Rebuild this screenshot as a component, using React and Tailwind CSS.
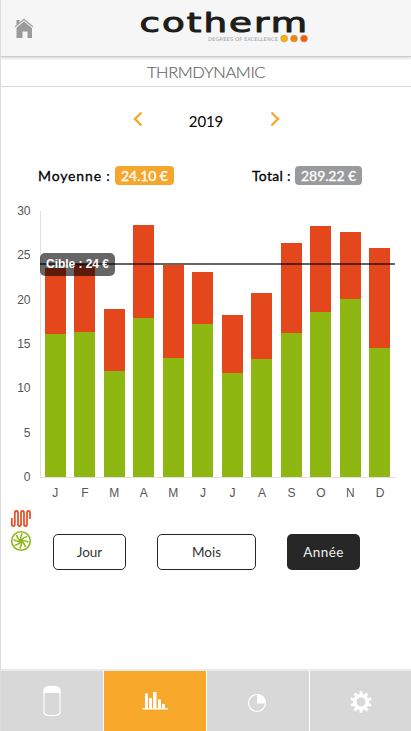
import React from 'react';

const PLOT_HEIGHT = 266;

// Pixel heights above the baseline: whole stack and its green part.
const MONTHS = [
  { label: 'J', total: 209.3, green: 143 },
  { label: 'F', total: 213, green: 145.4 },
  { label: 'M', total: 168, green: 106.5 },
  { label: 'A', total: 252, green: 159.3 },
  { label: 'M', total: 212.5, green: 119 },
  { label: 'J', total: 204.8, green: 153 },
  { label: 'J', total: 162, green: 104 },
  { label: 'A', total: 184, green: 118 },
  { label: 'S', total: 233.6, green: 143.8 },
  { label: 'O', total: 251.4, green: 164.7 },
  { label: 'N', total: 245, green: 178 },
  { label: 'D', total: 229, green: 129 },
];

const TICKS = [30, 25, 20, 15, 10, 5, 0];

function HomeIcon() {
  return (
    <svg width="20" height="20" viewBox="0 0 20 20" className="block">
      <path d="M2.500 2h3v3l-3 2.500z" fill="#999" />
      <path d="M2.500 9.500 10 3l8 6.500V20h-4.500v-6.500h-5V20h-6z" fill="#9b9b9b" />
      <path d="M1 8.800 10 1.400l8.900 7.400" fill="none" stroke="#a5a5a5" strokeWidth="1.300" />
      <path d="M1.800 9.800 10 3l8 6.800" fill="none" stroke="#eee" strokeWidth=".8" />
    </svg>
  );
}

function Logo() {
  return (
    <svg width="176" height="54" viewBox="0 0 176 54" className="block">
      <text x="0.300" y="32.300" transform="scale(1.380 1)" fontSize="27" textLength="121.500" lengthAdjust="spacing" fill="#1d1d1b" stroke="#1d1d1b" strokeWidth="1" strokeLinejoin="round" fontFamily="'DejaVu Sans', sans-serif">cotherm</text>
      <text x="69" y="40.700" fontSize="5" textLength="70" lengthAdjust="spacingAndGlyphs" fill="#9ba3a8" fontFamily="'DejaVu Sans', sans-serif">DEGREES OF EXCELLENCE</text>
      <g stroke="#b7a58c" strokeWidth=".6">
        <circle cx="145.200" cy="38.600" r="3.500" fill="#fbb003" />
        <circle cx="155" cy="38.600" r="3.500" fill="#f08505" />
        <circle cx="165" cy="38.600" r="3.500" fill="#eb6209" />
      </g>
    </svg>
  );
}

function Chevron({ right }) {
  return (
    <svg width="10" height="16" viewBox="0 0 10 16" className="-mt-[2px] block">
      <path d={right ? 'M1.500 1.500 8 8l-6.500 6.500' : 'M8.500 1.500 2 8l6.500 6.500'} fill="none" stroke="#f8a92c" strokeWidth="2.400" />
    </svg>
  );
}

function CoilIcon() {
  return (
    <svg width="22" height="19" viewBox="0 0 22 19" className="block">
      <path d="M1.800 9v6.200q0 1.800 1.500 1.800t1.500-1.800V3.800q0-1.800 1.600-1.800t1.600 1.800v11.400q0 1.800 1.500 1.800t1.500-1.800V3.800q0-1.800 1.500-1.800t1.500 1.800v11.400q0 1.800 1.500 1.800t1.500-1.800V3.800q0-1.800 1.500-1.800t1.500 1.800V10" fill="none" stroke="#e6522b" strokeWidth="1.800" />
    </svg>
  );
}

function FanIcon() {
  return (
    <svg width="22" height="22" viewBox="0 0 22 22" className="block" fill="none" stroke="#8eb91a">
      <circle cx="11" cy="11" r="9.300" strokeWidth="1.600" />
      <circle cx="11" cy="11" r="2.200" fill="#8eb91a" stroke="none" />
      {[0, 45, 90, 135, 180, 225, 270, 315].map((angle) => (
        <path key={angle} d="M11 9.500q-1-2.700 1.300-6" strokeWidth="1.500" transform={`rotate(${angle} 11 11)`} />
      ))}
    </svg>
  );
}

function TankIcon() {
  return (
    <svg width="18" height="32" viewBox="0 0 18 32" className="block">
      <path d="M.500 8V5Q.500.800 9 .800T17.500 5v3z" fill="#fff" />
      <path d="M1 6v21q0 3.700 8 3.700t8-3.700V6" fill="none" stroke="#fff" strokeWidth="1.200" />
    </svg>
  );
}

function BarsIcon() {
  return (
    <svg width="26" height="20" viewBox="0 0 26 20" className="block" fill="#fff">
      <path d="M3 2.500h3V18H3zM7 7h3v11H7zM11 1h3.500v17H11zM16 8.500h3V18h-3zM20 13h3v5h-3zM0 17.300h26v1.200H0z" />
    </svg>
  );
}

function PieIcon() {
  return (
    <svg width="20" height="20" viewBox="0 0 20 20" className="block">
      <circle cx="10" cy="10" r="8.500" fill="none" stroke="#fff" strokeWidth="1.200" />
      <path d="M10 1v9.500h8.900A8.900 9 0 0 0 10 1z" fill="#fff" />
    </svg>
  );
}

function GearIcon() {
  return (
    <svg width="22" height="22" viewBox="0 0 22 22" className="block">
      <circle cx="11" cy="11" r="6.300" fill="none" stroke="#fff" strokeWidth="3.600" />
      {[0, 36, 72, 108, 144, 180, 216, 252, 288, 324].map((angle) => (
        <rect key={angle} x="9.500" y=".300" width="3" height="4" fill="#fff" transform={`rotate(${angle} 11 11)`} />
      ))}
    </svg>
  );
}

function Chart() {
  return (
    <section className="mt-[18px] h-[298px] font-['Liberation_Sans',sans-serif] text-[#555]">
      <div className="flex">
        <div className="-mt-2 flex h-[282px] w-[39px] flex-col justify-between pr-[9.500px] text-right text-[12px] leading-4">
          {TICKS.map((tick) => <span key={tick}>{tick}</span>)}
        </div>
        <div className="relative h-[267px] w-[356px] border-b border-l border-[#e0e0e0]">
          <div className="flex items-end gap-[8.530px] pl-[3.800px]" style={{ height: PLOT_HEIGHT }}>
            {MONTHS.map((month, i) => (
              <div key={i} className="flex w-[21px] shrink-0 flex-col justify-end bg-[#e4471c]" style={{ height: month.total }}>
                <div className="bg-[#8eb711]" style={{ height: month.green }} />
              </div>
            ))}
          </div>
          <div className="absolute top-[52px] -left-px h-[2px] w-[355px] bg-black/60" />
          <div className="absolute top-[42px] -left-px h-[23px] w-[75px] rounded-[5px] bg-black/60 text-center text-[12px] leading-[23px] font-bold tracking-[-0.050px] whitespace-nowrap text-white">Cible : 24 €</div>
        </div>
      </div>
      <div className="flex gap-[8.530px] pl-[43.800px] text-[12px] leading-4">
        {MONTHS.map((month, i) => <span key={i} className="w-[21px] shrink-0 text-center">{month.label}</span>)}
      </div>
    </section>
  );
}

export default function App() {
  return (
    <main className="flex h-[731px] w-[411px] flex-col overflow-hidden border-l border-[#dcdcdc] bg-white font-['Lato',sans-serif] text-black">
      <header className="flex h-[57px] shrink-0 border-b border-[#cecece] bg-[#f6f6f6] pl-[13px] shadow-[0_1px_3px_#ccc]">
        <div className="mt-[18px] w-[125px]"><HomeIcon /></div>
        <Logo />
      </header>
      <h1 className="h-[30px] shrink-0 border-b border-[#d7d7d7] text-center text-[16.500px] leading-[30px] font-light tracking-[-0.400px] text-[#666] [-webkit-text-stroke:0.200px_#666]">THRMDYNAMIC</h1>

      <nav className="mt-[24px] flex h-[18px] items-center justify-center">
        <Chevron />
        <span className="w-[127px] pt-px text-center text-[15px] leading-[18px] tracking-[-0.100px]">2019</span>
        <Chevron right />
      </nav>

      <div className="mt-[37px] flex h-[19px] text-[14px] leading-[19px]">
        <div className="flex w-[213px] pl-[37px]">
          <span className="w-[77px] tracking-[0.850px] whitespace-nowrap [-webkit-text-stroke:0.300px_black]">Moyenne :</span>
          <span className="w-[59px] rounded-[4px] bg-[#f6a62d] text-center tracking-[-0.100px] text-white [-webkit-text-stroke:0.300px_white]">24.10 €</span>
        </div>
        <div className="flex pl-[38px]">
          <span className="w-[43px] tracking-[0.300px] whitespace-nowrap [-webkit-text-stroke:0.300px_black]">Total :</span>
          <span className="w-[67px] rounded-[4px] bg-[#999a9b] text-center tracking-[-0.100px] text-white [-webkit-text-stroke:0.300px_white]">289.22 €</span>
        </div>
      </div>

      <div className="mt-[8px]"><Chart /></div>

      <div className="flex h-[61px] shrink-0">
        <div className="flex w-[52px] flex-col gap-[2px] pl-[9px]">
          <CoilIcon />
          <FanIcon />
        </div>
        <div className="mt-[25px] flex h-[36px] gap-[31px] text-[13.500px] leading-[18px] text-[#333]">
          <button className="w-[73px] rounded-[5px] border border-[#262626] pb-px">Jour</button>
          <button className="w-[99px] rounded-[5px] border border-[#262626] pb-px">Mois</button>
          <button className="w-[73px] rounded-[5px] bg-[#272727] pb-px tracking-[0.400px] text-[#eee]">Année</button>
        </div>
      </div>

      <footer className="mt-auto grid h-[62px] shrink-0 grid-cols-[102px_102px_102px_101px] gap-px border-t-2 border-[#ebebeb] bg-white">
        <div className="flex items-center justify-center bg-[#d8d8d8]"><TankIcon /></div>
        <div className="flex items-center justify-center bg-[#f8a92c]"><BarsIcon /></div>
        <div className="flex items-center justify-center bg-[#d8d8d8] pt-[4px] pr-[2px]"><PieIcon /></div>
        <div className="flex items-center justify-center bg-[#d8d8d8] pt-[2px]"><GearIcon /></div>
      </footer>
    </main>
  );
}
